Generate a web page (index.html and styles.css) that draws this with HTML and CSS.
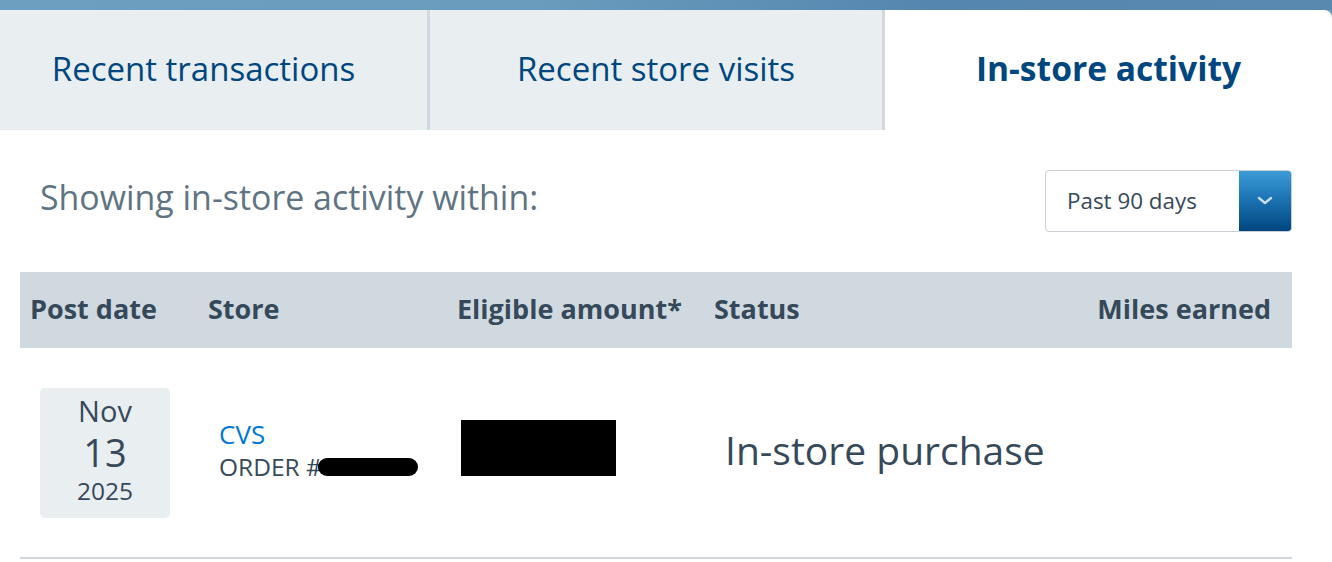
FILE: index.html
```html
<!DOCTYPE html>
<html>
<head>
<meta charset="utf-8">
<link rel="stylesheet" href="styles.css">
</head>
<body>
<div class="topbar"></div>
<div class="tabs">
  <div class="tab tab1">Recent transactions</div>
  <div class="tab tab2">Recent store visits</div>
  <div class="tab active">In-store activity</div>
</div>
<div class="panel">
  <div class="filter">
    <div class="filter-label">Showing in-store activity within:</div>
    <div class="select">
      <div class="select-text">Past 90 days</div>
      <div class="select-btn">
        <svg width="16" height="10" viewBox="0 0 16 10"><path d="M2 2 L8 7 L14 2" fill="none" stroke="#c9dcec" stroke-width="2.4" stroke-linecap="round" stroke-linejoin="round"/></svg>
      </div>
    </div>
  </div>
  <div class="table">
    <div class="thead">
      <div class="c-date">Post date</div>
      <div class="c-store">Store</div>
      <div class="c-amt">Eligible amount*</div>
      <div class="c-status">Status</div>
      <div class="c-miles">Miles earned</div>
    </div>
    <div class="row">
      <div class="c-date">
        <div class="datebox">
          <div class="mon">Nov</div>
          <div class="day">13</div>
          <div class="yr">2025</div>
        </div>
      </div>
      <div class="c-store">
        <div class="store-name">CVS</div>
        <div class="order">ORDER #<span class="redact"></span></div>
      </div>
      <div class="c-amt"><div class="blackbox"></div></div>
      <div class="c-status status-text">In-store purchase</div>
      <div class="c-miles"></div>
    </div>
  </div>
</div>
</body>
</html>
```
FILE: styles.css
```css
* { box-sizing: border-box; }
body {
  margin: 0;
  width: 1332px;
  height: 562px;
  overflow: hidden;
  font-family: "Open Sans", "Noto Sans", sans-serif;
  background: #ffffff;
  color: #36495a;
}
.topbar {
  height: 10px;
  background: linear-gradient(90deg, #6c9fc0 0%, #6a9cbd 40%, #5586af 70%, #5a89b0 100%);
}
.tabs {
  display: flex;
  height: 120px;
  background: #6a9cbd;
}
.tab {
  display: flex;
  align-items: center;
  justify-content: center;
  background: #e9eef0;
  font-size: 33px;
  color: #00467f;
  padding-bottom: 4px;
  white-space: nowrap;
}
.tab1 { width: 430px; padding-right: 20px; border-right: 3px solid #d0d9e0; }
.tab2 { width: 455px; border-right: 3px solid #d0d9e0; }
.active {
  flex: 1;
  background: #ffffff;
  font-weight: 700;
  font-size: 33.6px;
  border-top-right-radius: 8px;
}
.panel { padding: 0 40px 0 20px; }
.filter {
  display: flex;
  justify-content: space-between;
  align-items: center;
  padding: 40px 0 40px 20px;
  height: 142px;
}
.filter-label {
  font-size: 33.9px;
  color: #5f7483;
  margin-top: -8px;
  white-space: nowrap;
}
.select {
  display: flex;
  width: 247px;
  height: 62px;
  border: 1px solid #c9cfd4;
  border-radius: 4px;
  overflow: hidden;
}
.select-text {
  flex: 1;
  display: flex;
  align-items: center;
  padding-left: 21px;
  font-size: 22.4px;
  color: #36495a;
  white-space: nowrap;
  padding-bottom: 2px;
}
.select-btn {
  width: 52px;
  display: flex;
  align-items: center;
  justify-content: center;
  background: linear-gradient(180deg, #3c9bd7 0%, #1a70b0 50%, #00467f 100%);
}
.table { width: 1272px; }
.thead {
  display: flex;
  align-items: center;
  height: 76px;
  background: #d0d9e0;
  font-weight: 700;
  font-size: 27px;
  color: #36495a;
  white-space: nowrap;
}
.thead > div { margin-top: -4px; }
.c-date { width: 188px; padding-left: 10px; }
.c-store { width: 249px; }
.c-amt { width: 257px; }
.c-status { width: 300px; white-space: nowrap; }
.c-miles { flex: 1; text-align: right; padding-right: 21px; }
.row {
  display: flex;
  align-items: center;
  height: 211px;
  border-bottom: 2px solid #d0d9e0;
}
.row .c-date { padding-left: 20px; }
.datebox {
  width: 130px;
  height: 130px;
  background: #e9eef0;
  border-radius: 5px;
  display: flex;
  flex-direction: column;
  align-items: center;
  justify-content: center;
  color: #36495a;
}
.mon { font-size: 29px; line-height: 38px; margin-top: -6px; }
.day { font-size: 38px; line-height: 44px; }
.yr { font-size: 24.5px; line-height: 34px; }
.row .c-store { padding-left: 11px; width: 253px; margin-top: -6px; }
.store-name { font-size: 26px; color: #0078d2; line-height: 34px; }
.order { font-size: 24.5px; color: #36495a; line-height: 32px; display: flex; align-items: center; white-space: nowrap; }
.redact {
  display: inline-block;
  width: 100px;
  height: 18px;
  background: #000;
  border-radius: 9px;
  margin-left: -4px;
}
.row .c-amt { width: 264px; }
.blackbox { width: 155px; height: 56px; background: #000; margin-top: -10px; }
.status-text { font-size: 39px; color: #36495a; flex: 1; margin-top: -6px; }
```
